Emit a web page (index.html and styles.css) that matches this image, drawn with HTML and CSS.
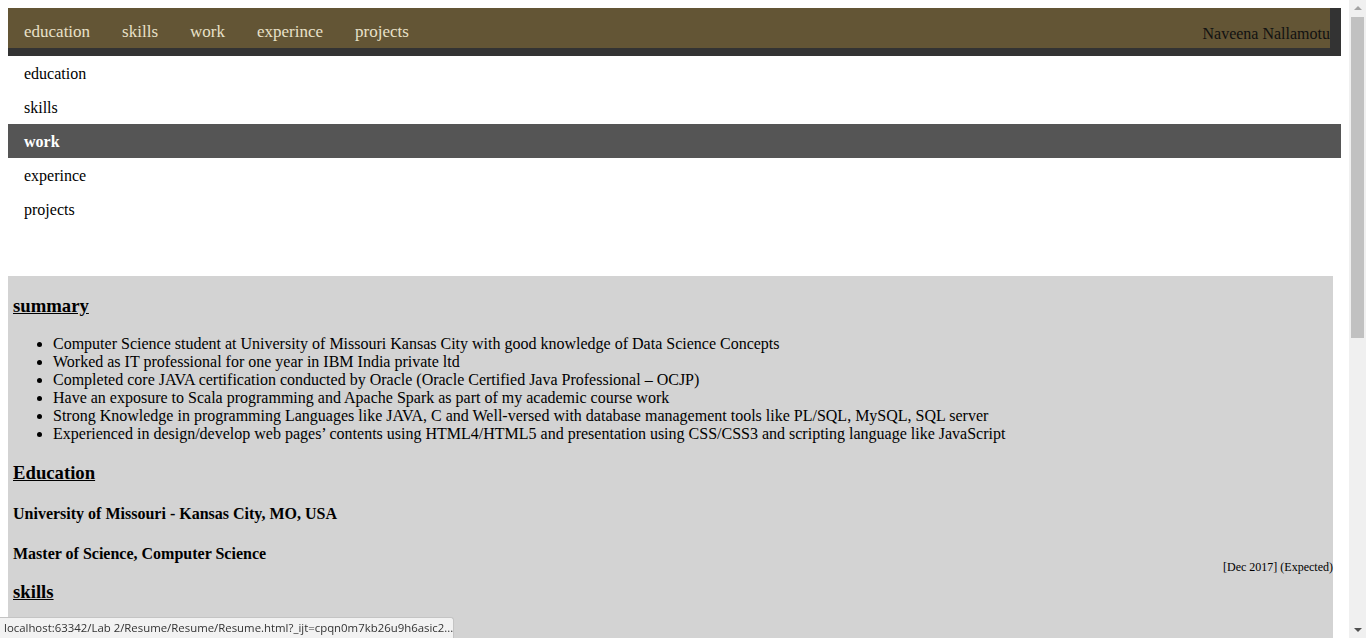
FILE: index.html
```html
<!DOCTYPE html>
<html lang="en">
<head>
<meta charset="utf-8">
<title>Resume</title>
<link rel="stylesheet" href="styles.css">
</head>
<body>
<header class="topbar">
  <nav class="menu">
    <a href="#education">education</a>
    <a href="#skills">skills</a>
    <a href="#work">work</a>
    <a href="#experince">experince</a>
    <a href="#projects">projects</a>
    <span class="name">Naveena Nallamotu</span>
  </nav>
</header>
<ul class="side">
  <li><a href="#education">education</a></li>
  <li><a href="#skills">skills</a></li>
  <li><a class="active" href="#work">work</a></li>
  <li><a href="#experince">experince</a></li>
  <li><a href="#projects">projects</a></li>
</ul>
<main class="resume">
  <h3 class="title">summary</h3>
  <ul class="bullets">
    <li>Computer Science student at University of Missouri Kansas City with good knowledge of Data Science Concepts</li>
    <li>Worked as IT professional for one year in IBM India private ltd</li>
    <li>Completed core JAVA certification conducted by Oracle (Oracle Certified Java Professional – OCJP)</li>
    <li>Have an exposure to Scala programming and Apache Spark as part of my academic course work</li>
    <li>Strong Knowledge in programming Languages like JAVA, C and Well-versed with database management tools like PL/SQL, MySQL, SQL server</li>
    <li>Experienced in design/develop web pages’ contents using HTML4/HTML5 and presentation using CSS/CSS3 and scripting language like JavaScript</li>
  </ul>
  <h3 class="title" id="education">Education</h3>
  <h4>University of Missouri - Kansas City, MO, USA</h4>
  <h4 class="degree">Master of Science, Computer Science</h4>
  <div class="date">[Dec 2017] (Expected)</div>
  <h3 class="title" id="skills">skills</h3>
  <ul class="bullets">
    <li>Programming Languages: JAVA, C, Scala, Python</li>
    <li>Web Technologies: HTML4/HTML5, CSS/CSS3, JavaScript</li>
    <li>Databases: PL/SQL, MySQL, SQL server</li>
    <li>Big Data: Apache Spark, Hadoop</li>
  </ul>
  <h3 class="title" id="work">work</h3>
  <h4>IBM India private ltd</h4>
  <ul class="bullets">
    <li>Worked as IT professional for one year</li>
    <li>Developed and maintained database procedures using PL/SQL</li>
  </ul>
  <h3 class="title" id="experince">experince</h3>
  <ul class="bullets">
    <li>Application Developer, IBM India private ltd</li>
    <li>Graduate Student, University of Missouri - Kansas City</li>
  </ul>
  <h3 class="title" id="projects">projects</h3>
  <ul class="bullets">
    <li>Resume web page using HTML5 and CSS3</li>
    <li>Data analysis with Apache Spark and Scala</li>
    <li>Student management system in JAVA</li>
  </ul>
  <div class="spacer"></div>
</main>
<div class="scrollbar" aria-hidden="true">
  <span class="arrow up"></span>
  <span class="thumb"></span>
  <span class="arrow down"></span>
</div>
<div class="status">localhost:63342/Lab 2/Resume/Resume/Resume.html?_ijt=cpqn0m7kb26u9h6asic2...</div>
</body>
</html>
```
FILE: styles.css
```css
html {
  background: #fff;
}
body {
  margin: 8px 25px 8px 8px;
  font-family: "Liberation Serif", "Times New Roman", serif;
  font-size: 16px;
  color: #000;
}
.topbar {
  background: #333;
  padding: 0 11px 8px 0;
}
.menu {
  display: flex;
  height: 40px;
  background: #635535;
  overflow: hidden;
}
.menu a {
  padding: 14px 16px 0;
  font-size: 17px;
  line-height: 19px;
  color: #e9e1c9;
  text-decoration: none;
}
.menu .name {
  margin-left: auto;
  padding-top: 17px;
  line-height: 18px;
  font-size: 16px;
  color: #111;
  white-space: nowrap;
  margin-right: 0;
}
.side {
  list-style: none;
  margin: 0;
  padding: 0;
}
.side a {
  display: block;
  padding: 9px 16px 7px;
  line-height: 18px;
  color: #000;
  text-decoration: none;
}
.side a.active {
  background: #555;
  color: #fff;
  font-weight: bold;
}
.resume {
  display: flow-root;
  margin: 50px 8px 0 0;
  padding: 0 5px;
  background: #d3d3d3;
}
.title {
  font-size: 18.72px;
  margin: 18.72px 0;
  text-decoration: underline;
}
.bullets {
  margin: 16px 0;
  padding-left: 40px;
  line-height: 18px;
}
h4 {
  font-size: 16px;
  margin: 21.28px 0;
}
.degree {
  margin-bottom: 0;
}
.date {
  text-align: right;
  font-size: 12px;
  line-height: 14px;
  margin: -3px -5px -11px 0;
}
.spacer {
  height: 300px;
}
.scrollbar {
  position: fixed;
  top: 0;
  right: 0;
  width: 17px;
  height: 100%;
  background: #f0f0f0;
  display: flex;
  flex-direction: column;
  align-items: center;
}
.scrollbar .arrow {
  width: 0;
  height: 0;
  border-left: 4px solid transparent;
  border-right: 4px solid transparent;
}
.scrollbar .up {
  margin-top: 6px;
  border-bottom: 4px solid #a3a3a3;
}
.scrollbar .thumb {
  margin-top: 7px;
  width: 13px;
  height: 321px;
  background: #c1c1c1;
}
.scrollbar .down {
  margin-top: auto;
  margin-bottom: 6px;
  border-top: 4px solid #505050;
}
.status {
  position: fixed;
  left: 0;
  bottom: 0;
  width: 449px;
  height: 20px;
  padding-left: 4px;
  background: #f2f2f2;
  border: 1px solid #c4c4c4;
  border-left: none;
  border-bottom: none;
  border-top-right-radius: 3px;
  font-family: "Open Sans", "Noto Sans", sans-serif;
  font-size: 11.4px;
  line-height: 20px;
  color: #333;
  white-space: nowrap;
}
```
